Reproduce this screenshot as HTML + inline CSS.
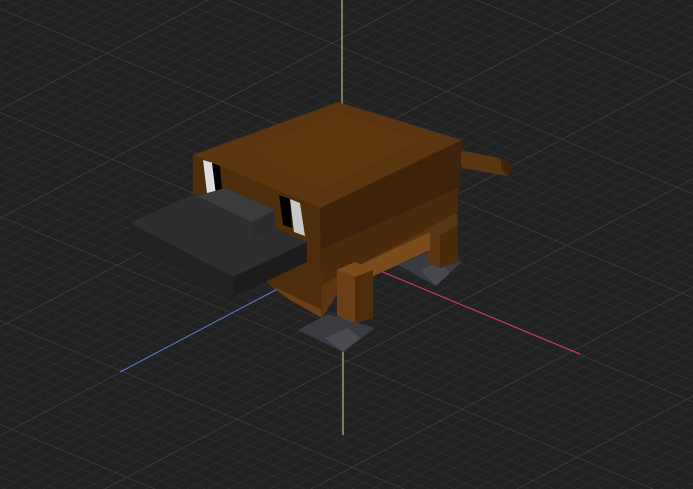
<!DOCTYPE html>
<html><head><style>html,body{margin:0;padding:0;background:#222}svg{display:block}</style></head><body>
<svg width="693" height="489" viewBox="0 0 693 489" xmlns="http://www.w3.org/2000/svg">
<defs>
<pattern id="g" width="10" height="10" patternUnits="userSpaceOnUse" patternTransform="matrix(1.15,0.48,-1.1,0.58,342,255)">
<path d="M0 0H10M0 0V10" stroke="#333" stroke-width="0.9" fill="none"/>
</pattern>
<pattern id="G" width="100" height="100" patternUnits="userSpaceOnUse" patternTransform="matrix(1.15,0.48,-1.1,0.58,342,255)">
<path d="M0 0H100M0 0V100" stroke="#444" stroke-width="1.1" fill="none"/>
</pattern>
</defs>
<rect width="693" height="489" fill="#222"/>
<rect width="693" height="489" fill="url(#g)"/>
<rect width="693" height="489" fill="url(#G)"/>
<line x1="342" y1="255" x2="580" y2="354" stroke="#d23a5a" stroke-width="1"/>
<line x1="342" y1="255" x2="120" y2="372" stroke="#5a78d8" stroke-width="1"/>
<line x1="342" y1="0" x2="342" y2="140" stroke="#c8d8a0" stroke-width="1"/>
<line x1="343" y1="330" x2="343" y2="435" stroke="#c8d8a0" stroke-width="1"/>
<!-- back feet -->
<polygon points="398,265 425,253 462,262 436,286" fill="#3a3b40"/>
<polygon points="420,270 440,262 450,272 436,286" fill="#48494e"/>
<!-- back right leg -->
<polygon points="427,222 445,215 458,220 458,262 440,268 427,262" fill="#5a3512"/>
<polygon points="440,228 458,220 458,262 440,268" fill="#4a2a0c"/>
<!-- tail -->
<polygon points="458,150 500,158 513,165 508,176 462,168" fill="#5a3512"/>
<polygon points="500,158 513,165 508,176 502,170" fill="#3f230a"/>
<!-- lower body -->
<polygon points="270,275 320,300 322,318 290,300 270,285" fill="#6b4018"/>
<polygon points="320,250 455,190 458,225 340,290 322,318" fill="#5a3512"/>
<polygon points="360,265 430,232 430,250 365,280" fill="#7a4b1c"/>
<!-- left/front body face -->
<polygon points="193,155 320,208 322,310 270,285 193,195" fill="#4e2d0d"/>
<!-- right body face -->
<polygon points="320,208 462,140 458,212 322,285" fill="#3e230a"/>
<polygon points="320,250 458,188 458,212 322,285" fill="#4a2a0c"/>
<!-- top -->
<polygon points="193,155 338,102 462,140 320,208" fill="#5b3510"/>
<polygon points="250,150 338,112 420,140 320,190" fill="#603812" opacity="0.6"/>
<!-- eyes -->
<polygon points="203,160 213,163 217,196 207,193" fill="#ddd"/>
<polygon points="212,163 220,166 222,190 216,195" fill="#000"/>
<polygon points="279,195 290,199 292,228 283,225" fill="#000"/>
<polygon points="290,199 300,203 305,236 294,232" fill="#c8c8c8"/>
<!-- beak -->
<polygon points="130,223 197,193 307,242 233,277" fill="#2e2e30"/>
<polygon points="130,223 233,277 233,297 130,245" fill="#222223"/>
<polygon points="233,277 307,242 307,262 233,297" fill="#1c1c1d"/>
<polygon points="197,196 225,188 275,210 252,222" fill="#3b3b3e"/>
<polygon points="252,222 275,210 275,228 252,240" fill="#2b2b2d"/>
<!-- front feet -->
<polygon points="298,330 328,314 375,328 343,352" fill="#3a3b40"/>
<polygon points="325,338 348,328 360,338 343,352" fill="#4a4b50"/>
<!-- front leg -->
<polygon points="337,270 355,262 373,270 373,318 355,323 337,316" fill="#6b4018"/>
<polygon points="337,270 355,262 373,270 355,277" fill="#7a4b1c"/>
<polygon points="355,277 373,270 373,318 355,323" fill="#4e2d0d"/>
</svg>
</body></html>
